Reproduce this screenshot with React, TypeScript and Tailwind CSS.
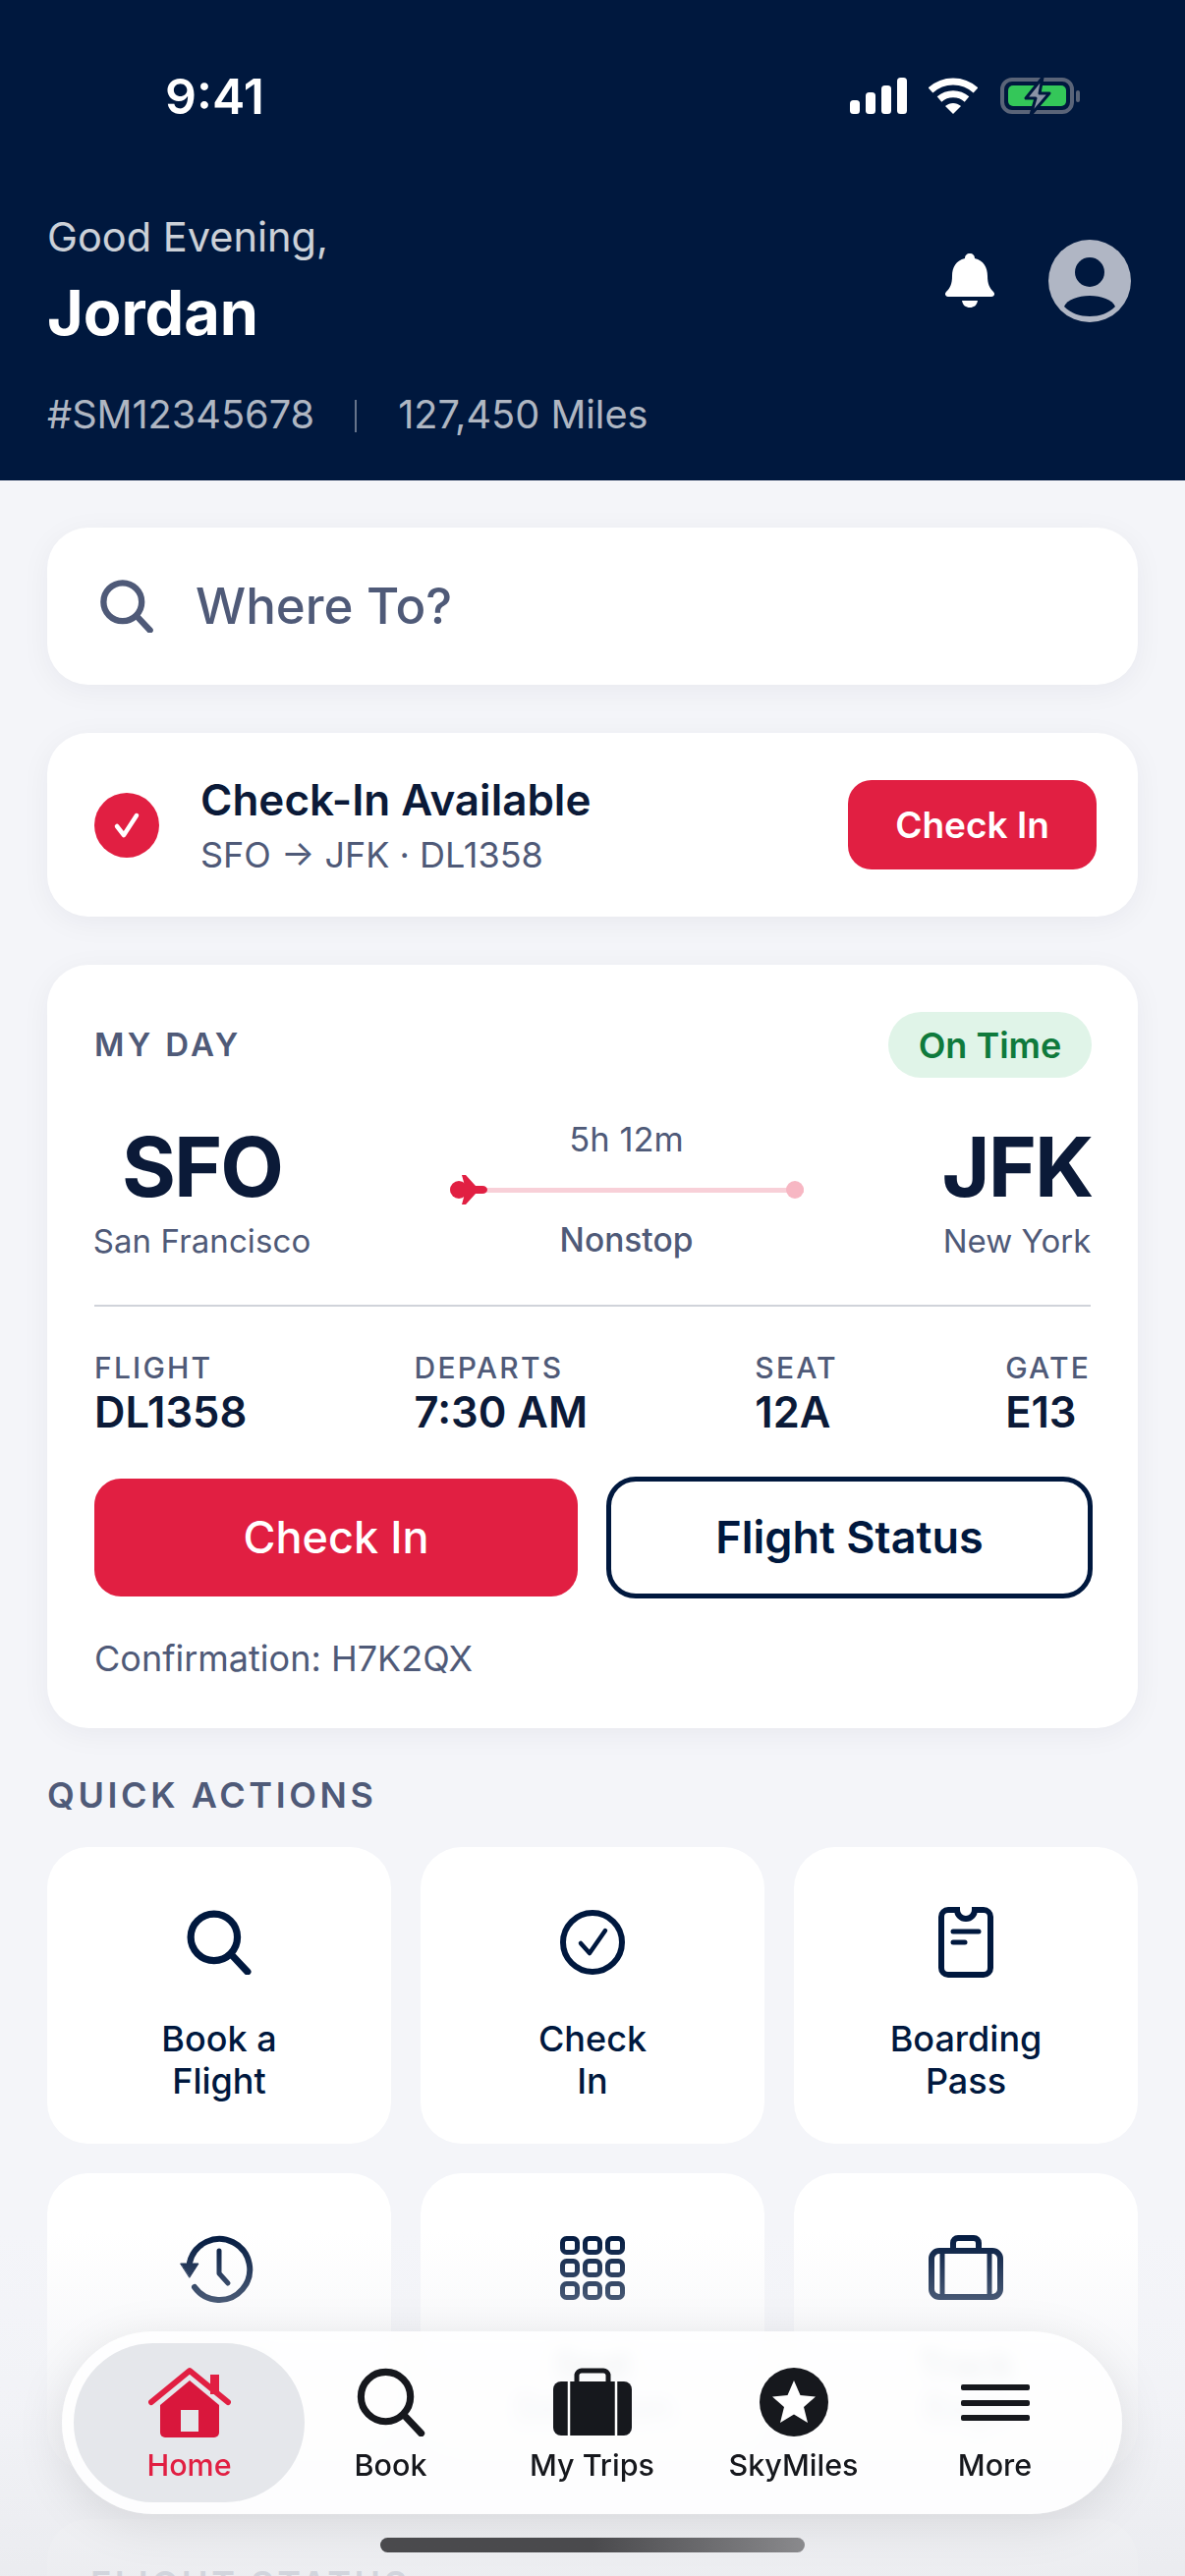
import React from 'react';

const navy = '#00183e';

const StatusIcons = () => (
  <div className="flex items-center">
    <svg width="58" height="38" viewBox="0 0 58 38" fill="#fff">
      <rect x="0" y="23" width="10" height="14" rx="3.5" />
      <rect x="16" y="15" width="10" height="22" rx="3.5" />
      <rect x="32" y="8" width="10" height="29" rx="3.5" />
      <rect x="48" y="0" width="10" height="37" rx="3.5" />
    </svg>
    <svg className="ml-[22px]" width="50" height="38" viewBox="0 0 50 38" fill="none">
      <path d="M2 13 C15 1 35 1 48 13" stroke="#fff" strokeWidth="7" />
      <path d="M11 22 C19 15 31 15 39 22" stroke="#fff" strokeWidth="7" />
      <path d="M17 29 C22 25 28 25 33 29 L25 37 Z" fill="#fff" />
    </svg>
    <svg className="ml-[23px]" width="82" height="42" viewBox="0 0 82 42" fill="none">
      <rect x="2" y="4" width="71" height="33" rx="10" stroke="#5a6478" strokeWidth="4" />
      <rect x="8" y="10" width="59" height="21" rx="5" fill="#34c759" />
      <rect x="77" y="15" width="4" height="12" rx="2" fill="#5a6478" />
      <path d="M43 2 L26 23 H36 L31 40 L50 18 H40 Z" fill="#8a93a6" stroke="#00183e" strokeWidth="3" strokeLinejoin="round" />
    </svg>
  </div>
);

const Bell = () => (
  <svg width="50" height="56" viewBox="0 0 50 56" fill="#fff">
    <path d="M25 0 C22 0 20 2 20 5 C11 7 7 14 7 23 C7 31 5 35 1 39 C-1 41 0 44 3 44 H47 C50 44 51 41 49 39 C45 35 43 31 43 23 C43 14 39 7 30 5 C30 2 28 0 25 0 Z" />
    <path d="M17 48 H33 C32 53 29 55 25 55 C21 55 18 53 17 48 Z" />
  </svg>
);

const Avatar = () => (
  <svg width="84" height="84" viewBox="0 0 84 84">
    <circle cx="42" cy="42" r="42" fill="#b0b6c4" />
    <circle cx="42" cy="33" r="15" fill="#00183e" />
    <path d="M16 68 C19 61 30 57 42 57 C54 57 65 61 68 68 C61 75 52 78 42 78 C32 78 23 75 16 68 Z" fill="#00183e" />
  </svg>
);

const SearchGlyph = ({ size, color, sw }: { size: number; color: string; sw: number }) => (
  <svg width={size} height={size} viewBox="0 0 64 64" fill="none" stroke={color} strokeWidth={sw} strokeLinecap="round">
    <circle cx="27" cy="27" r="23" />
    <path d="M44 44 L60 61" />
  </svg>
);

const Plane = () => (
  <svg className="absolute left-0 top-[-13px]" width="38" height="30" viewBox="0 0 38 30" fill="#e11f42">
    <circle cx="9" cy="15" r="9" />
    <path d="M12 0 L16 0 L26 11 H33 C36 11 38 13 38 15 C38 17 36 19 33 19 H26 L16 30 H12 L15 19 H10 V11 H15 Z" />
  </svg>
);

const CheckTile = () => (
  <svg width="66" height="72" viewBox="0 0 66 72" fill="none" stroke={navy} strokeWidth="6" strokeLinecap="round" strokeLinejoin="round">
    <circle cx="33" cy="36" r="30" />
    <path d="M21 37 L30 47 L46 24" strokeWidth="4.5" />
  </svg>
);

const BoardingTile = () => (
  <svg width="56" height="72" viewBox="0 0 56 72" fill="none" stroke={navy} strokeWidth="6" strokeLinecap="round">
    <path d="M10 3 H19 A9 9 0 0 0 37 3 H46 A7 7 0 0 1 53 10 V62 A7 7 0 0 1 46 69 H10 A7 7 0 0 1 3 62 V10 A7 7 0 0 1 10 3 Z" />
    <path d="M15 25 H41" strokeWidth="5" />
    <path d="M15 36 H27" strokeWidth="5" />
  </svg>
);

const HistoryTile = () => (
  <svg width="80" height="72" viewBox="0 0 80 72" fill="none" stroke={navy} strokeWidth="6" strokeLinecap="round" strokeLinejoin="round">
    <path d="M10 30 A31 31 0 1 1 15 55" />
    <path d="M1 31 H19 L10 45 Z" fill={navy} strokeWidth="1" />
    <path d="M40 18 V41 L49 51" strokeWidth="5" />
  </svg>
);

const GridTile = () => (
  <svg width="66" height="72" viewBox="0 0 66 72" fill="none" stroke={navy} strokeWidth="5">
    {[3, 26, 49].map((y) =>
      [0, 23, 46].map((x) => <rect key={`${x}-${y}`} x={x + 2.5} y={y + 2.5} width="15" height="14" rx="4" />),
    )}
  </svg>
);

const BagTile = () => (
  <svg width="76" height="72" viewBox="0 0 76 72" fill="none" stroke={navy} strokeWidth="6">
    <rect x="3" y="18" width="70" height="47" rx="8" />
    <path d="M25 18 V10 A5 5 0 0 1 30 5 H46 A5 5 0 0 1 51 10 V18" />
    <path d="M14 18 V65 M62 18 V65" strokeWidth="5" />
  </svg>
);

const HomeNav = () => (
  <svg width="84" height="72" viewBox="0 0 84 72" fill="none">
    <path d="M3 36 L42 4 L81 36" stroke="#e11f42" strokeWidth="6" strokeLinecap="round" strokeLinejoin="round" />
    <rect x="63" y="8" width="9" height="20" fill="#e11f42" />
    <path d="M42 14 L72 39 V67 A5 5 0 0 1 67 72 H17 A5 5 0 0 1 12 67 V39 Z" fill="#d9173c" />
    <rect x="33" y="44" width="18" height="22" fill="#e5e7eb" />
  </svg>
);

const TripsNav = () => (
  <svg width="80" height="70" viewBox="0 0 80 70">
    <path d="M24 16 V7 A5 5 0 0 1 29 3 H51 A5 5 0 0 1 56 7 V16" fill="none" stroke="#16181d" strokeWidth="5" />
    <rect x="0" y="14" width="80" height="55" rx="8" fill="#16181d" />
    <path d="M16 14 V69 M64 14 V69" stroke="#fff" strokeWidth="2.5" />
  </svg>
);

const MilesNav = () => (
  <svg width="70" height="70" viewBox="0 0 70 70">
    <circle cx="35" cy="35" r="35" fill="#16181d" />
    <path d="M35 13 L41.5 28 L57 29.5 L45 40 L49 56 L35 47.5 L21 56 L25 40 L13 29.5 L28.5 28 Z" fill="#fff" />
  </svg>
);

const MoreNav = () => (
  <svg width="70" height="70" viewBox="0 0 70 70" fill="#16181d">
    <rect x="0" y="17" width="70" height="6" rx="2" />
    <rect x="0" y="33" width="70" height="6" rx="2" />
    <rect x="0" y="48" width="70" height="6" rx="2" />
  </svg>
);

const quickActions = [
  { lines: ['Book a', 'Flight'], icon: <SearchGlyph size={66} color={navy} sw={7} /> },
  { lines: ['Check', 'In'], icon: <CheckTile /> },
  { lines: ['Boarding', 'Pass'], icon: <BoardingTile /> },
  { lines: ['Flight', 'Status'], icon: <HistoryTile /> },
  { lines: ['Seat', 'Selection'], icon: <GridTile /> },
  { lines: ['Track', 'Bags'], icon: <BagTile /> },
];

const flightDetails = [
  { label: 'FLIGHT', value: 'DL1358' },
  { label: 'DEPARTS', value: '7:30 AM' },
  { label: 'SEAT', value: '12A' },
  { label: 'GATE', value: 'E13' },
];

const navItems = [
  { label: 'Home', icon: <HomeNav />, active: true },
  { label: 'Book', icon: <SearchGlyph size={70} color="#16181d" sw={6.5} />, active: false },
  { label: 'My Trips', icon: <TripsNav />, active: false },
  { label: 'SkyMiles', icon: <MilesNav />, active: false },
  { label: 'More', icon: <MoreNav />, active: false },
];

export default function App() {
  return (
    <div className="relative w-[1206px] h-[2622px] overflow-hidden bg-[#f4f5f9] font-[Inter,sans-serif]">
      {/* Header */}
      <header className="h-[489px] bg-[#00183e] pt-[70px] pl-[48px] pr-[55px] text-white">
        <div className="flex h-[56px] items-center justify-between pl-[120px] pr-[51px]">
          <span className="text-[50px] font-semibold leading-[56px]">9:41</span>
          <StatusIcons />
        </div>
        <div className="mt-[90px] flex items-center justify-between">
          <div>
            <div className="text-[41.5px] leading-[50px] text-white/80">Good Evening,</div>
            <div className="mt-[14px] text-[63px] font-bold leading-[76px]">Jordan</div>
          </div>
          <div className="flex items-center gap-[55px]">
            <Bell />
            <Avatar />
          </div>
        </div>
        <div className="mt-[43px] flex h-[48px] items-center text-[39.7px] text-white/70">
          <span>#SM12345678</span>
          <span className="ml-[41px] h-[33px] w-[2px] bg-white/40" />
          <span className="ml-[42px]">127,450 Miles</span>
        </div>
      </header>

      <main className="px-[48px] pt-[48px]">
        {/* Search */}
        <div className="flex h-[160px] items-center rounded-[42px] bg-white pl-[54px] shadow-[0_6px_30px_rgba(0,26,64,0.05)]">
          <SearchGlyph size={54} color="#4f5a78" sw={7.5} />
          <span className="ml-[43px] text-[51px] font-medium text-[#4f5a78]">Where To?</span>
        </div>

        {/* Check-in banner */}
        <div className="mt-[49px] flex h-[187px] items-center rounded-[42px] bg-white pl-[48px] pr-[42px] shadow-[0_6px_30px_rgba(0,26,64,0.05)]">
          <div className="flex h-[66px] w-[66px] items-center justify-center rounded-full bg-[#e11f42]">
            <svg width="36" height="36" viewBox="0 0 36 36" fill="none" stroke="#fff" strokeWidth="4.5" strokeLinecap="round" strokeLinejoin="round">
              <path d="M8 19 L15 28 L28 8" />
            </svg>
          </div>
          <div className="ml-[42px] flex-1">
            <div className="text-[44px] font-semibold leading-[54px] text-[#0b1a38]">Check-In Available</div>
            <div className="mt-[7px] text-[36px] leading-[44px] text-[#4f5a78]">SFO → JFK · DL1358</div>
          </div>
          <button className="h-[91px] w-[253px] rounded-[24px] bg-[#e11f42] text-[37px] font-semibold text-white">Check In</button>
        </div>

        {/* My Day */}
        <section className="mt-[49px] h-[777px] rounded-[42px] bg-white px-[48px] pt-[48px] shadow-[0_6px_30px_rgba(0,26,64,0.05)]">
          <div className="flex h-[67px] items-center justify-between">
            <span className="text-[33px] font-semibold tracking-[3.3px] text-[#4f5a78]">MY DAY</span>
            <span className="flex h-[67px] w-[207px] translate-x-[1px] items-center justify-center rounded-full bg-[#e0f4e8] text-[36px] font-semibold text-[#0f7a3c]">On Time</span>
          </div>

          <div className="mt-[43px] flex justify-between">
            <div className="flex w-[219px] flex-col items-center">
              <span className="text-[84px] font-bold leading-[96px] tracking-[-2px] text-[#0b1a38]">SFO</span>
              <span className="mt-[5px] whitespace-nowrap text-[33px] leading-[44px] tracking-[0.1px] text-[#4f5a78]">San Francisco</span>
            </div>
            <div className="flex w-[360px] flex-col items-center">
              <span className="mt-[-2px] text-[34.5px] leading-[44px] text-[#4f5a78]">5h 12m</span>
              <div className="relative mt-[27px] h-[5px] w-full bg-[#f8d0d8]">
                <Plane />
                <span className="absolute right-0 top-[-7px] h-[18px] w-[18px] rounded-full bg-[#f7b7c3]" />
              </div>
              <span className="mt-[26px] text-[33.5px] font-medium leading-[44px] text-[#4f5a78]">Nonstop</span>
            </div>
            <div className="flex w-[150px] flex-col items-center">
              <span className="text-[84px] font-bold leading-[96px] tracking-[-2px] text-[#0b1a38]">JFK</span>
              <span className="mt-[5px] whitespace-nowrap text-[33px] leading-[44px] text-[#4f5a78]">New York</span>
            </div>
          </div>

          <div className="mt-[43px] h-[2px] bg-[#d0d3da]" />

          <div className="mt-[44px] flex justify-between">
            {flightDetails.map((d) => (
              <div key={d.label}>
                <div className="text-[30px] font-medium leading-[36px] tracking-[2.2px] text-[#4f5a78]">{d.label}</div>
                <div className="mt-[2px] text-[43.5px] font-semibold leading-[50px] text-[#0b1a38]">{d.value}</div>
              </div>
            ))}
          </div>

          <div className="mt-[41px] flex items-center gap-[29px]">
            <button className="h-[120px] w-[492px] shrink-0 rounded-[27px] bg-[#e11f42] text-[45px] font-medium text-white">Check In</button>
            <button className="h-[124px] w-[495px] shrink-0 rounded-[30px] border-[5px] border-[#00183e] bg-white text-[45px] font-semibold text-[#00183e]">Flight Status</button>
          </div>

          <div className="mt-[39px] text-[36px] leading-[44px] text-[#4f5a78]">Confirmation: H7K2QX</div>
        </section>

        {/* Quick actions */}
        <h2 className="mt-[46px] text-[36px] font-semibold leading-[44px] tracking-[3.6px] text-[#4f5a78]">QUICK ACTIONS</h2>
        <div className="mt-[31px] grid grid-cols-3 gap-[30px]">
          {quickActions.map((a) => (
            <div key={a.lines[0] + a.lines[1]} className="flex h-[302px] flex-col items-center rounded-[42px] bg-white pt-[61px]">
              <div className="flex h-[72px] items-center justify-center">{a.icon}</div>
              <div className="mt-[41px] text-center text-[36px] font-medium leading-[43px] text-[#00183e]">
                <div>{a.lines[0]}</div>
                <div>{a.lines[1]}</div>
              </div>
            </div>
          ))}
        </div>

        {/* Flight status, mostly below the fold */}
        <section className="mt-[50px] h-[300px] rounded-[42px] bg-white px-[44px] pt-[44px]">
          <h2 className="text-[36px] font-semibold leading-[44px] tracking-[3.6px] text-[#4f5a78]">FLIGHT STATUS</h2>
        </section>
      </main>

      {/* Fade behind the tab bar */}
      <div className="pointer-events-none absolute inset-x-0 bottom-0 h-[350px] bg-gradient-to-b from-[#f4f5f9]/0 via-[#f1f2f6]/75 to-[#e9eaee]/85" />

      {/* Tab bar */}
      <nav className="absolute left-[63px] top-[2373px] grid h-[186px] w-[1079px] grid-cols-5 rounded-full bg-white/85 px-[27px] shadow-[0_10px_50px_rgba(0,0,0,0.1)] backdrop-blur-sm">
        <span className="absolute left-[12px] top-[12px] h-[162px] w-[235px] rounded-full bg-[#e5e7eb]" />
        {navItems.map((n) => (
          <div key={n.label} className="relative flex flex-col items-center pt-[36px]">
            <div className="flex h-[72px] items-center justify-center">{n.icon}</div>
            <span className={`mt-[9px] text-[30.5px] font-medium leading-[38px] ${n.active ? 'text-[#e11f42]' : 'text-[#16181d]'}`}>{n.label}</span>
          </div>
        ))}
      </nav>

      {/* Home indicator */}
      <div className="absolute left-[387px] top-[2583px] h-[15px] w-[432px] rounded-full bg-gradient-to-r from-[#4a4a4d] via-[#4a4a4d] to-[#8a8a8d]" />
    </div>
  );
}
